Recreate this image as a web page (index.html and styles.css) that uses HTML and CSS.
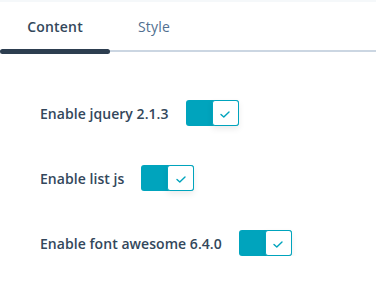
FILE: index.html
```html
<!DOCTYPE html>
<html lang="en">
<head>
    <meta charset="UTF-8">
    <meta name="viewport" content="width=device-width, initial-scale=1.0">
    <title>Module Settings</title>
    <link rel="stylesheet" href="styles.css">
</head>
<body>
    <div class="topbar"></div>
    <div class="tabs">
        <div class="tab active">Content</div>
        <div class="tab">Style</div>
    </div>
    <div class="panel">
        <div class="field">
            <span class="field-label">Enable jquery 2.1.3</span>
            <span class="toggle">
                <span class="knob">
                    <svg width="10" height="7" viewBox="0 0 10 7"><path d="M1 3.5 L3.8 6 L9 1" fill="none" stroke="#00a4bd" stroke-width="1.4" stroke-linecap="round" stroke-linejoin="round"/></svg>
                </span>
            </span>
        </div>
        <div class="field">
            <span class="field-label">Enable list js</span>
            <span class="toggle">
                <span class="knob">
                    <svg width="10" height="7" viewBox="0 0 10 7"><path d="M1 3.5 L3.8 6 L9 1" fill="none" stroke="#00a4bd" stroke-width="1.4" stroke-linecap="round" stroke-linejoin="round"/></svg>
                </span>
            </span>
        </div>
        <div class="field">
            <span class="field-label">Enable font awesome 6.4.0</span>
            <span class="toggle">
                <span class="knob">
                    <svg width="10" height="7" viewBox="0 0 10 7"><path d="M1 3.5 L3.8 6 L9 1" fill="none" stroke="#00a4bd" stroke-width="1.4" stroke-linecap="round" stroke-linejoin="round"/></svg>
                </span>
            </span>
        </div>
    </div>
</body>
</html>
```

FILE: styles.css
```css
:root {
    --text-color: #33475b;
    --tab-line: #cbd6e2;
    --tab-active: #2d3e50;
    --teal: #00a4bd;
    --strip-bg: #f5f8fa;
}

body {
    margin: 0;
    background-color: #fff;
    font-family: 'Open Sans', 'Liberation Sans', sans-serif;
    color: var(--text-color);
}

.topbar {
    height: 2px;
    background-color: var(--strip-bg);
}

.tabs {
    display: flex;
    height: 50px;
    border-bottom: 2px solid var(--tab-line);
    box-sizing: border-box;
}

.tab {
    position: relative;
    display: flex;
    align-items: center;
    justify-content: center;
    font-size: 14px;
    letter-spacing: 0.2px;
}

.tab:first-child {
    width: 110px;
    font-weight: 600;
}

.tab:nth-child(2) {
    width: 88px;
    color: #516f90;
}

.tab.active::after {
    content: '';
    position: absolute;
    left: 0;
    right: 0;
    bottom: -4px;
    height: 5px;
    border-radius: 3px;
    background-color: var(--tab-active);
}

.panel {
    padding: 48px 0 0 40px;
    display: flex;
    flex-direction: column;
    gap: 39px;
}

.field {
    display: flex;
    align-items: center;
    gap: 17px;
}

.field-label {
    font-size: 14px;
    font-weight: 600;
    letter-spacing: 0.05px;
}

.toggle {
    display: flex;
    justify-content: flex-end;
    width: 53px;
    height: 26px;
    border-radius: 3px;
    background-color: var(--teal);
}

.knob {
    display: flex;
    align-items: center;
    justify-content: center;
    width: 27px;
    height: 26px;
    box-sizing: border-box;
    border: 1px solid var(--teal);
    border-radius: 3px;
    background-color: #fff;
    box-shadow: 0 3px 6px rgba(0, 0, 0, 0.08);
}

.knob svg {
    margin-top: 2px;
}
```
